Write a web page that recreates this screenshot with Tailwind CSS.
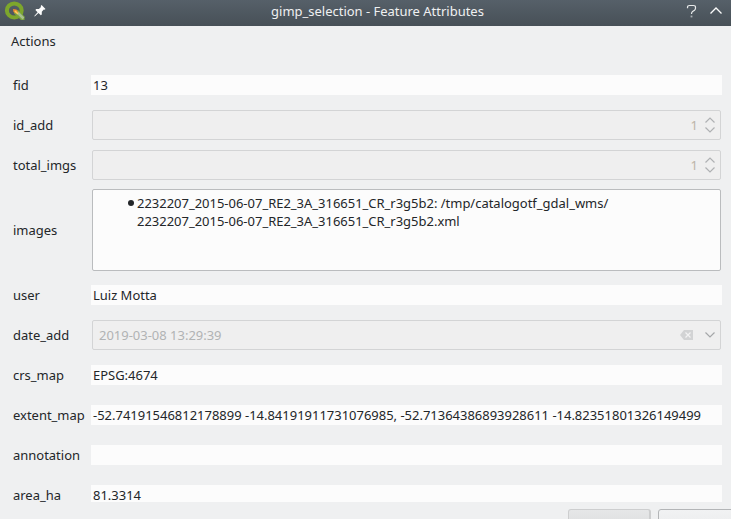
<!DOCTYPE html>
<html lang="en">
<head>
<meta charset="utf-8">
<title>gimp_selection - Feature Attributes</title>
<script src="https://cdn.jsdelivr.net/npm/@tailwindcss/browser@4"></script>
</head>
<body class="flex h-[519px] w-[731px] flex-col overflow-hidden bg-[#eff0f1] font-['Noto_Sans',sans-serif] text-[12.98px] leading-[18px] text-[#232629]">
<header class="grid h-[26px] shrink-0 grid-cols-[1fr_auto_1fr] items-start bg-linear-to-b from-[#566069] to-[#475057] text-[#eff0f1]">
  <div class="flex gap-[8px] pl-[4px]">
    <svg class="mt-px h-[20px] w-[22px]" viewBox="0 0 22 20">
      <ellipse cx="10.3" cy="9.4" rx="7.4" ry="7" fill="none" stroke="#7da62c" stroke-width="4"/>
      <path d="M10 9 L14 9 L20.5 15.5 L20.5 19 L17 19 L10 12.5Z" fill="#79a53b"/>
      <path d="M13.5 11.5 L19.5 17.5" stroke="#a8bf8d" stroke-width="2.5"/>
      <path d="M9 8 L12.5 8.5 L14.5 12 L12 12.5 L9.5 11Z" fill="#f08a2c"/>
      <path d="M11 10 L14 13" stroke="#f6d266" stroke-width="1.5"/>
    </svg>
    <svg class="mt-[5px] h-[12px] w-[12px]" viewBox="0 0 12 12" fill="#fcfcfc">
      <path d="M7.6 0 L11.5 3.9 L10.5 4.8 L9.8 4.6 L7.8 6.8 L7.8 9.5 L6.8 10.3 L4.5 8.1 L1 11.3 L.3 11.5 L.5 10.7 L3.6 7.2 L1.4 5 L2.2 4.1 L4.9 4.1 L7 2 L6.7 1Z"/>
    </svg>
  </div>
  <h1 class="mt-[2px] translate-x-[12px] whitespace-pre">gimp_selection - Feature Attributes</h1>
  <div class="mt-[4px] flex justify-end gap-[11px] pr-[8px]">
    <svg class="h-[15px] w-[12px]" viewBox="0 0 12 15" fill="none" stroke="#e8eaeb" stroke-width="1.2">
      <path d="M1.5 4.3 V3.5 Q1.5 1.5 3.5 1.5 H7.5 Q9.5 1.5 9.5 3.3 V4.3 Q9.5 5.5 8.5 6.3 L6.6 7.6 Q5.5 8.4 5.5 10"/>
      <path d="M4.6 12.5 H6.4" stroke="#a9afb3" stroke-width="1.8"/>
    </svg>
    <svg class="h-[15px] w-[14px]" viewBox="0 0 14 15" fill="none" stroke="#fcfcfc" stroke-width="1.3"><path d="M1.5 9.5 L7 4 L12.5 9.5"/></svg>
  </div>
</header>
<nav class="h-[39px] shrink-0 pl-[11px] pt-[6px]">Actions</nav>
<main class="h-[437px] shrink-0 pl-[13px] pr-[9px]">
  <div class="flex h-10 items-center"><label class="w-[78px]">fid</label><div class="h-5 flex-1 bg-[#fcfcfc] pl-[2px] pt-px">13</div></div>
  <div class="flex h-10 items-center"><label class="w-[79px]">id_add</label>
    <div class="mr-px flex h-[30px] flex-1 items-center justify-end gap-[6px] rounded-[2px] border border-[#d3d4d5] bg-[#efefef] pr-[4px] text-[#bdb5a8]"><span>1</span>
      <svg class="h-[18px] w-[12px]" viewBox="0 0 12 18" fill="none" stroke="#afb1b3" stroke-width="1.2"><path d="M1.5 6.5 L6 2 L10.5 6.5 M1.5 11.5 L6 16 L10.5 11.5"/></svg></div></div>
  <div class="flex h-10 items-center"><label class="w-[79px]">total_imgs</label>
    <div class="mr-px flex h-[30px] flex-1 items-center justify-end gap-[6px] rounded-[2px] border border-[#d3d4d5] bg-[#efefef] pr-[4px] text-[#bdb5a8]"><span>1</span>
      <svg class="h-[18px] w-[12px]" viewBox="0 0 12 18" fill="none" stroke="#afb1b3" stroke-width="1.2"><path d="M1.5 6.5 L6 2 L10.5 6.5 M1.5 11.5 L6 16 L10.5 11.5"/></svg></div></div>
  <div class="flex h-[90px] items-center"><label class="w-[79px]">images</label>
    <div class="mr-px flex h-[82px] flex-1 rounded-[2px] border border-[#babcbe] bg-[#fcfcfc] pl-[35px] pt-[4px]">
      <span class="mr-[3px] mt-[6px] size-[6px] rounded-full bg-[#232629]"></span>
      <p class="whitespace-nowrap">2232207_2015-06-07_RE2_3A_316651_CR_r3g5b2: /tmp/catalogotf_gdal_wms/<br>2232207_2015-06-07_RE2_3A_316651_CR_r3g5b2.xml</p>
    </div></div>
  <div class="flex h-10 items-center"><label class="w-[78px]">user</label><div class="h-5 flex-1 bg-[#fcfcfc] pl-[2px] pt-px">Luiz Motta</div></div>
  <div class="flex h-10 items-center"><label class="w-[79px]">date_add</label>
    <div class="mr-px flex h-[30px] flex-1 items-center rounded-[2px] border border-[#d3d4d5] bg-[#efefef] pl-[6px] pr-[4px] text-[#b1b3b4]"><span class="flex-1">2019-03-08 13:29:39</span>
      <svg class="mr-[11px] h-[10px] w-[13px]" viewBox="0 0 13 10"><path d="M4 0 H13 V10 H4 L0 5Z" fill="#d2d3d4"/><path d="M5.5 2.5 L10.5 7.5 M10.5 2.5 L5.5 7.5" stroke="#f3f3f3" stroke-width="1.2"/></svg>
      <svg class="h-[12px] w-[12px]" viewBox="0 0 12 12" fill="none" stroke="#a5a7a9" stroke-width="1.2"><path d="M1.5 3.5 L6 8 L10.5 3.5"/></svg></div></div>
  <div class="flex h-10 items-center"><label class="w-[78px]">crs_map</label><div class="h-5 flex-1 bg-[#fcfcfc] pl-[2px] pt-px">EPSG:4674</div></div>
  <div class="flex h-10 items-center"><label class="w-[78px]">extent_map</label><div class="h-5 flex-1 whitespace-nowrap bg-[#fcfcfc] pl-[2px] pt-px">-52.74191546812178899 -14.84191911731076985, -52.71364386893928611 -14.82351801326149499</div></div>
  <div class="flex h-10 items-center"><label class="w-[78px]">annotation</label><div class="h-5 flex-1 bg-[#fcfcfc]"></div></div>
  <div class="flex h-[27px] items-start pt-[10px] leading-[14px]"><label class="w-[78px] pt-[3px]">area_ha</label><div class="h-[17px] flex-1 bg-[#fcfcfc] pl-[2px] pt-[3px]">81.3314</div></div>
</main>
<footer class="flex min-h-0 flex-1 gap-[7px] overflow-hidden pl-[568px] pt-[7px]">
  <div class="h-[30px] w-[83px] shrink-0 rounded-[3px] border border-r-2 border-[#cdcecf] bg-linear-to-b from-[#e6e7e8] to-[#d8d9da]"></div>
  <div class="h-[30px] w-[83px] shrink-0 rounded-[3px] border border-[#b3b5b7] bg-linear-to-b from-[#f1f2f3] to-[#e8e9ea]"></div>
</footer>
</body>
</html>
